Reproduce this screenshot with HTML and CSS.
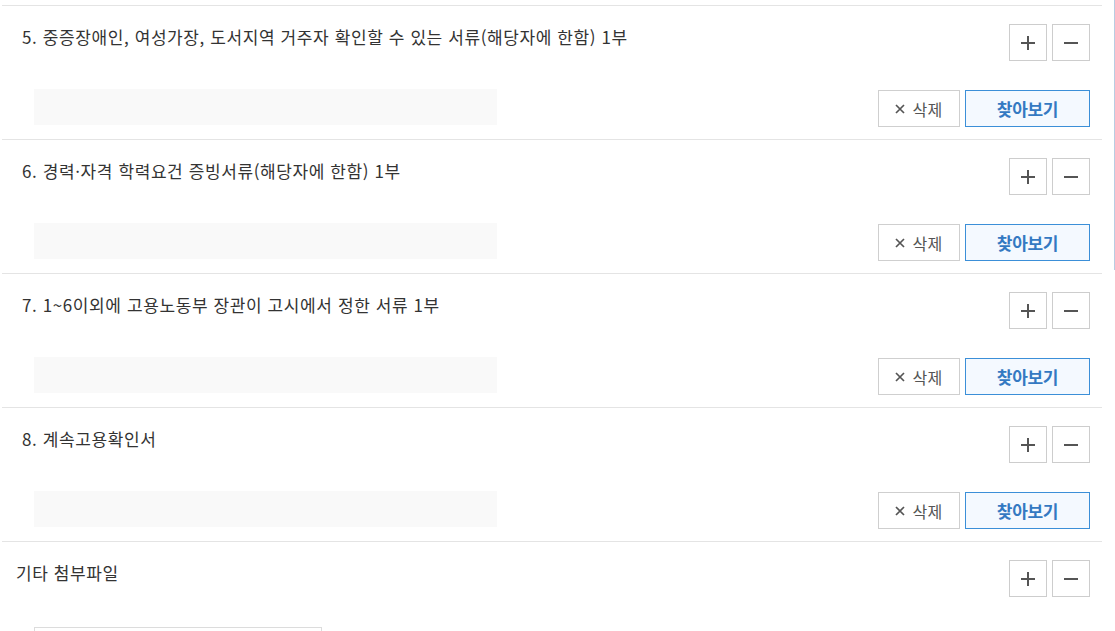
FILE: index.html
```html
<!DOCTYPE html>
<html lang="ko">
<head>
<meta charset="utf-8">
<link rel="stylesheet" href="styles.css">
</head>
<body>
<div class="scroll-edge"></div>
<div class="list">
  <div class="item">
    <div class="item-head">
      <div class="item-title">5. 중증장애인, 여성가장, 도서지역 거주자 확인할 수 있는 서류(해당자에 한함) 1부</div>
      <div class="pm">
        <button class="pm-btn"><svg width="14" height="14" viewBox="0 0 14 14"><path d="M7 0v14M0 7h14" stroke="#555" stroke-width="2"/></svg></button>
        <button class="pm-btn"><svg width="14" height="14" viewBox="0 0 14 14"><path d="M0 7h14" stroke="#555" stroke-width="2"/></svg></button>
      </div>
    </div>
    <div class="item-file">
      <div class="file-field"></div>
      <div class="file-actions">
        <button class="btn-del"><svg class="x-ico" width="10" height="10" viewBox="0 0 10 10"><path d="M1 1l8 8M9 1l-8 8" stroke="#555" stroke-width="1.7"/></svg>삭제</button>
        <button class="btn-find">찾아보기</button>
      </div>
    </div>
  </div>
  <div class="item">
    <div class="item-head">
      <div class="item-title">6. 경력·자격 학력요건 증빙서류(해당자에 한함) 1부</div>
      <div class="pm">
        <button class="pm-btn"><svg width="14" height="14" viewBox="0 0 14 14"><path d="M7 0v14M0 7h14" stroke="#555" stroke-width="2"/></svg></button>
        <button class="pm-btn"><svg width="14" height="14" viewBox="0 0 14 14"><path d="M0 7h14" stroke="#555" stroke-width="2"/></svg></button>
      </div>
    </div>
    <div class="item-file">
      <div class="file-field"></div>
      <div class="file-actions">
        <button class="btn-del"><svg class="x-ico" width="10" height="10" viewBox="0 0 10 10"><path d="M1 1l8 8M9 1l-8 8" stroke="#555" stroke-width="1.7"/></svg>삭제</button>
        <button class="btn-find">찾아보기</button>
      </div>
    </div>
  </div>
  <div class="item">
    <div class="item-head">
      <div class="item-title">7. 1~6이외에 고용노동부 장관이 고시에서 정한 서류 1부</div>
      <div class="pm">
        <button class="pm-btn"><svg width="14" height="14" viewBox="0 0 14 14"><path d="M7 0v14M0 7h14" stroke="#555" stroke-width="2"/></svg></button>
        <button class="pm-btn"><svg width="14" height="14" viewBox="0 0 14 14"><path d="M0 7h14" stroke="#555" stroke-width="2"/></svg></button>
      </div>
    </div>
    <div class="item-file">
      <div class="file-field"></div>
      <div class="file-actions">
        <button class="btn-del"><svg class="x-ico" width="10" height="10" viewBox="0 0 10 10"><path d="M1 1l8 8M9 1l-8 8" stroke="#555" stroke-width="1.7"/></svg>삭제</button>
        <button class="btn-find">찾아보기</button>
      </div>
    </div>
  </div>
  <div class="item">
    <div class="item-head">
      <div class="item-title">8. 계속고용확인서</div>
      <div class="pm">
        <button class="pm-btn"><svg width="14" height="14" viewBox="0 0 14 14"><path d="M7 0v14M0 7h14" stroke="#555" stroke-width="2"/></svg></button>
        <button class="pm-btn"><svg width="14" height="14" viewBox="0 0 14 14"><path d="M0 7h14" stroke="#555" stroke-width="2"/></svg></button>
      </div>
    </div>
    <div class="item-file">
      <div class="file-field"></div>
      <div class="file-actions">
        <button class="btn-del"><svg class="x-ico" width="10" height="10" viewBox="0 0 10 10"><path d="M1 1l8 8M9 1l-8 8" stroke="#555" stroke-width="1.7"/></svg>삭제</button>
        <button class="btn-find">찾아보기</button>
      </div>
    </div>
  </div>
  <div class="item item-etc">
    <div class="item-head">
      <div class="item-title">기타 첨부파일</div>
      <div class="pm">
        <button class="pm-btn"><svg width="14" height="14" viewBox="0 0 14 14"><path d="M7 0v14M0 7h14" stroke="#555" stroke-width="2"/></svg></button>
        <button class="pm-btn"><svg width="14" height="14" viewBox="0 0 14 14"><path d="M0 7h14" stroke="#555" stroke-width="2"/></svg></button>
      </div>
    </div>
    <div class="etc-box"></div>
  </div>
</div>
</body>
</html>
```

FILE: styles.css
```css
* { box-sizing: border-box; }
html, body { margin: 0; padding: 0; background: #fff; overflow: hidden; }
body {
  font-family: "Noto Sans CJK KR", "Noto Sans", sans-serif;
  color: #333;
  height: 631px;
  position: relative;
}
.scroll-edge {
  position: absolute;
  left: 1114px;
  top: 0;
  width: 1px;
  height: 270px;
  background: #b8cde2;
}
.list {
  width: 1100px;
  margin-left: 2px;
  padding-top: 5px;
}
.item {
  border-top: 1px solid #e4e4e4;
  padding: 18px 12px 12px 20px;
}
.item-head {
  display: flex;
  justify-content: space-between;
  align-items: flex-start;
  height: 37px;
}
.item-title {
  font-size: 17px;
  line-height: 24px;
  padding-top: 1px;
  color: #333;
  letter-spacing: 0.6px;
}
.pm { display: flex; gap: 5px; }
.pm-btn {
  width: 38px;
  height: 37px;
  padding: 0;
  border: 1px solid #cdcdcd;
  background: #fff;
  display: flex;
  align-items: center;
  justify-content: center;
}
.item-file {
  display: flex;
  justify-content: space-between;
  align-items: flex-start;
  margin-top: 28px;
  height: 38px;
  padding-left: 12px;
}
.file-field {
  width: 463px;
  height: 36px;
  background: #f9f9f9;
}
.file-actions { display: flex; gap: 5px; margin-top: 1px; }
.btn-del {
  width: 82px;
  height: 37px;
  border: 1px solid #cfcfcf;
  background: #fff;
  color: #555;
  font-family: "Noto Sans CJK KR", sans-serif;
  font-size: 16px;
  letter-spacing: 0.4px;
  padding: 0;
  display: flex;
  align-items: center;
  justify-content: center;
  gap: 7px;
}
.x-ico { flex: none; margin-top: 1px; }
.btn-find {
  width: 125px;
  height: 37px;
  border: 1px solid #3b8fd8;
  background: #f4f9ff;
  color: #3479c2;
  font-family: "Noto Sans CJK KR", sans-serif;
  font-size: 17px;
  font-weight: 700;
  letter-spacing: -0.3px;
  padding: 0;
}
.item-etc .item-title { margin-left: -6px; }
.etc-box {
  margin-top: 30px;
  margin-left: 12px;
  width: 288px;
  height: 36px;
  border: 1px solid #dcdcdc;
  background: #fff;
}
```
